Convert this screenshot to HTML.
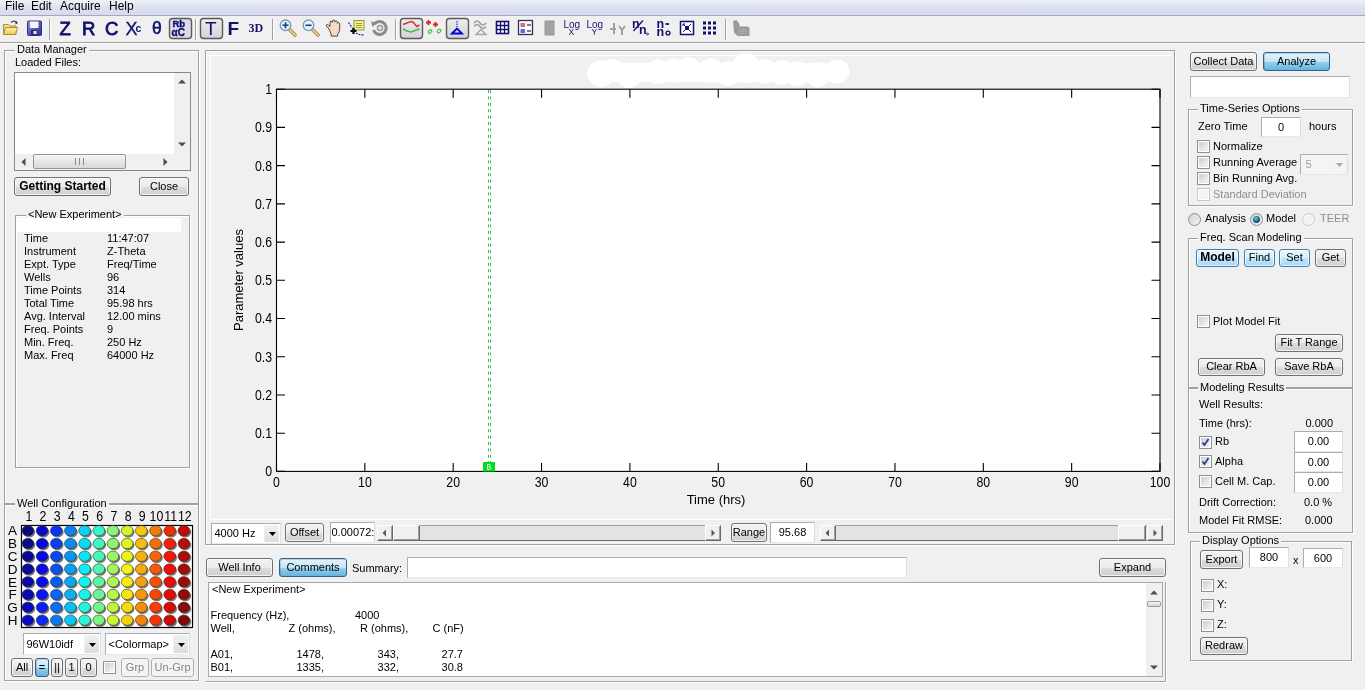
<!DOCTYPE html><html><head><meta charset="utf-8"><style>
*{margin:0;padding:0}
html,body{width:1365px;height:690px;overflow:hidden;background:#f0f0f0;font-family:"Liberation Sans",sans-serif;font-size:11px;color:#000}
div{position:absolute;box-sizing:border-box}
body{will-change:transform}
.t{white-space:pre;line-height:14px;height:14px}
.gt{white-space:pre;line-height:14px;height:14px;background:linear-gradient(transparent 6px,#f0f0f0 6px,#f0f0f0 10px,transparent 10px);padding:0 2px;z-index:5}
.grp{border:1px solid #a0a0a0;box-shadow:inset 1px 1px 0 #fff,1px 1px 0 #fff}
.btn{border:1px solid #707070;border-radius:3px;background:linear-gradient(#f3f3f3 0%,#ebebeb 50%,#dddddd 51%,#cfcfcf 100%);box-shadow:inset 0 0 0 1px rgba(255,255,255,.7);text-align:center;display:flex;align-items:center;justify-content:center;white-space:pre;padding-bottom:2px}
.btn.blue{border-color:#3c7fb1;background:linear-gradient(#eaf6fd 0%,#d9f0fc 50%,#bee6fd 51%,#a7d9f5 100%)}
.btn.pr{border-color:#2c628b;background:linear-gradient(#e5f4fc 0%,#c4e5f6 50%,#98d1ef 51%,#68b3db 100%);box-shadow:inset 1px 1px 0 rgba(0,0,0,.15)}
.btn.dis{border-color:#adb2b5;background:#f4f4f4;color:#838383;box-shadow:none}
.edit{background:#fff;border:1px solid #abadb3;border-right-color:#dbdfe6;border-bottom-color:#e3e9ef;white-space:pre;overflow:hidden}
.cb{border:1px solid #8e8f8f;background:#fff}
.cb::before{content:"";position:absolute;left:1px;top:1px;right:1px;bottom:1px;background:linear-gradient(135deg,#cbcfd5,#f6f6f6)}
.cb.dis{border-color:#c9c9c9}
.cb.dis::before{background:#f4f4f4}
.cb svg{z-index:2}
.rd{border:1px solid #8e8f8f;border-radius:50%;background:linear-gradient(135deg,#cbcfd5,#f6f6f6)}
.rd.dis{border-color:#cacaca;background:#f4f4f4}
.rdot{left:2px;top:2px;width:7px;height:7px;border-radius:50%;background:radial-gradient(circle at 40% 35%,#6cc8e0,#13607e 55%,#0a3a50)}
.dd{border:1px solid #abadb3;border-right-color:#dbdfe6;border-bottom-color:#e3e9ef;white-space:pre}
.ddb{right:1px;top:1px;width:15px;background:linear-gradient(#f2f2f2,#dcdcdc);border-left:1px solid #f0f0f0}
.ddb.dis{background:transparent}
.ax{font-size:13px;line-height:15px;height:15px;white-space:pre}
</style></head><body>

<div style="left:0;top:0;width:1365px;height:15px;background:linear-gradient(#f1f3fa 0%,#dde2f2 45%,#d5dbee 100%)"></div>
<div style="left:0;top:15px;width:1365px;height:1px;background:#a7abb0"></div>
<div style="left:0;top:16px;width:1365px;height:26px;background:#f0f0f0"></div>
<div style="left:0;top:42px;width:1365px;height:1px;background:#a0a0a0"></div>
<div style="left:0;top:43px;width:1365px;height:1px;background:#ffffff"></div>
<div class="t" style="left:5px;top:-1px;font-size:12px;line-height:15px">File</div>
<div class="t" style="left:31px;top:-1px;font-size:12px;line-height:15px">Edit</div>
<div class="t" style="left:60px;top:-1px;font-size:12px;line-height:15px">Acquire</div>
<div class="t" style="left:109px;top:-1px;font-size:12px;line-height:15px">Help</div>

<svg style="position:absolute;left:0;top:0" width="800" height="44">
<defs>
<linearGradient id="tg" x1="0" y1="0" x2="0" y2="1"><stop offset="0" stop-color="#eeeeef"/><stop offset="1" stop-color="#d2d2d6"/></linearGradient>
<linearGradient id="fold" x1="0" y1="0" x2="0" y2="1"><stop offset="0" stop-color="#fff3a8"/><stop offset="1" stop-color="#f0c848"/></linearGradient>
<linearGradient id="flop" x1="0" y1="0" x2="1" y2="1"><stop offset="0" stop-color="#8d8de0"/><stop offset="1" stop-color="#2b2b8a"/></linearGradient>
</defs>
<!-- folder -->
<path d="M3.5 24.5 h5 l1.5 1.5 h6 v8.5 h-12.5z" fill="#f6e18a" stroke="#a88f38" stroke-width="1"/>
<path d="M3.5 34.5 l2 -7 h12 l-2 7z" fill="url(#fold)" stroke="#a88f38" stroke-width="1"/>
<path d="M11 22.5 q3 -3 6 0" fill="none" stroke="#404040" stroke-width="1.2"/>
<path d="M15.5 21 l2.5 2 l-2.5 1.5z" fill="#303030"/>
<!-- floppy -->
<rect x="27.5" y="21" width="14" height="14.5" rx="1" fill="url(#flop)" stroke="#30308a" stroke-width="1"/>
<rect x="30" y="21.5" width="8.5" height="6.5" fill="#f4f4ff"/>
<rect x="31" y="30" width="6" height="5" fill="#2a2a70"/>
<rect x="33.5" y="31" width="3" height="3" fill="#e8e8ff"/>
<!-- separators -->
<g fill="#a0a0a0"><rect x="49" y="19" width="1" height="21"/><rect x="195" y="19" width="1" height="21"/><rect x="272" y="19" width="1" height="21"/><rect x="395" y="19" width="1" height="21"/><rect x="725" y="19" width="1" height="21"/></g>
<g fill="#ffffff"><rect x="50" y="19" width="1" height="21"/><rect x="196" y="19" width="1" height="21"/><rect x="273" y="19" width="1" height="21"/><rect x="396" y="19" width="1" height="21"/><rect x="726" y="19" width="1" height="21"/></g>
<!-- letters -->
<g font-family="Liberation Sans" font-weight="bold" fill="#10106e">
<g font-weight="normal" stroke="#10106e" stroke-width="0.8">
<text x="59.5" y="34.6" font-size="18.5">Z</text>
<text x="82" y="34.6" font-size="18.5">R</text>
<text x="105" y="34.6" font-size="18.5">C</text>
</g>
<text x="125.5" y="34.6" font-size="18" font-weight="normal" stroke="#10106e" stroke-width="0.3">X</text>
<text x="135.5" y="31.5" font-size="10.5">c</text>
<text x="152" y="34" font-size="17.5" font-weight="normal" stroke="#10106e" stroke-width="0.6">θ</text>
</g>
<!-- RbaC toggle -->
<rect x="169.5" y="18.5" width="22" height="20" rx="3" fill="#dcdde6" stroke="#5a5a5a" stroke-width="1.4"/>
<g font-family="Liberation Sans" font-weight="bold" fill="#10106e">
<text x="172.5" y="27" font-size="9.5" stroke="#10106e" stroke-width="0.4">Rb</text>
<text x="171.5" y="35.5" font-size="10" stroke="#10106e" stroke-width="0.4">αC</text>
</g>
<!-- T toggle -->
<rect x="200.5" y="18.5" width="22" height="20" rx="3" fill="url(#tg)" stroke="#5a5a5a" stroke-width="1.4"/>
<g font-family="Liberation Sans" fill="#10106e">
<text x="205" y="35" font-size="19">T</text>
<text x="227.5" y="35" font-size="19" font-weight="bold">F</text>
<text x="248.5" y="32" font-size="12" font-weight="bold" font-family="Liberation Serif">3D</text>
</g>
<!-- zoom in / out -->
<g>
<path d="M289.5 29.5 L295 35" stroke="#a07838" stroke-width="3.4" stroke-linecap="round"/>
<path d="M289.5 29.5 L295 35" stroke="#e8c888" stroke-width="2" stroke-linecap="round"/>
<circle cx="285.5" cy="25.3" r="5.3" fill="#e4f2fb" stroke="#7a9ab0" stroke-width="1.3"/>
<path d="M282.5 25.3h6M285.5 22.3v6" stroke="#1a3a8a" stroke-width="1.6"/>
<path d="M312.5 29.5 L318 35" stroke="#a07838" stroke-width="3.4" stroke-linecap="round"/>
<path d="M312.5 29.5 L318 35" stroke="#e8c888" stroke-width="2" stroke-linecap="round"/>
<circle cx="308.5" cy="25.3" r="5.3" fill="#e4f2fb" stroke="#7a9ab0" stroke-width="1.3"/>
<path d="M305.5 25.3h6" stroke="#1a3a8a" stroke-width="1.6"/>
</g>
<!-- hand -->
<path d="M329 29 l-2.5 -3 q-0.5 -1.5 1 -1.5 l2.5 2 v-4 q0 -1.5 1.3 -1.3 q1 .3 1 1.3 v-1 q0 -1.5 1.3 -1.5 q1.3 0 1.3 1.5 v0.5 q0.3 -1.3 1.3 -1.1 q1.2 .3 1.2 1.5 v1 q.4 -1 1.3 -.8 q1 .3 1 1.5 v5 q0 3 -2 5 v2 h-6.5 v-2 z" fill="#f6dcc4" stroke="#3a3a3a" stroke-width="0.9"/>
<!-- datatip -->
<rect x="354" y="20.5" width="10" height="9.5" fill="#f2f08a" stroke="#8a9a50" stroke-width="1"/>
<path d="M356 23.5h6M356 25.5h6M356 27.5h6" stroke="#8a8a40" stroke-width="0.8"/>
<path d="M348.5 22.5 l4 6 M356 33 q3 2 8 2" fill="none" stroke="#2020a0" stroke-width="1.1" stroke-dasharray="2 1"/>
<path d="M350.5 31h6M353.5 28v6" stroke="#000" stroke-width="2.2"/>
<!-- rotate -->
<path d="M374.5 24 A6.5 6.5 0 1 1 373.5 30" fill="none" stroke="#8c8c8c" stroke-width="3"/>
<path d="M371 21.5 l6 1 l-4.5 4.5z" fill="#8c8c8c"/>
<circle cx="380" cy="28" r="2.5" fill="none" stroke="#9a9a9a" stroke-width="1.5"/>
<!-- line toggle -->
<rect x="400.5" y="18.5" width="22" height="20" rx="3" fill="url(#tg)" stroke="#5a5a5a" stroke-width="1.4"/>
<path d="M403 24.5 L407 23 L411 21.5 L413 22 L415.5 25 L417 26.5 L419.5 25" fill="none" stroke="#e0303a" stroke-width="1.5"/>
<path d="M403 29 L407 31 L411 32 L415 30.5 L419.5 29" fill="none" stroke="#3ac040" stroke-width="1.5"/>
<!-- markers -->
<path d="M426 22.5h5M428.5 20v5M433 24.5h5M435.5 22v5" stroke="#e02020" stroke-width="1.8"/>
<ellipse cx="430" cy="31.5" rx="2" ry="1.5" transform="rotate(-40 430 31.5)" fill="none" stroke="#40c040" stroke-width="1.2"/>
<ellipse cx="439" cy="31" rx="2" ry="1.5" transform="rotate(-40 439 31)" fill="none" stroke="#40c040" stroke-width="1.2"/>
<!-- triangle toggle -->
<rect x="446.5" y="18.5" width="22" height="20" rx="3" fill="url(#tg)" stroke="#5a5a5a" stroke-width="1.4"/>
<path d="M457 21v6" stroke="#0000d0" stroke-width="1" stroke-dasharray="1.5 1"/>
<path d="M452 33.5 L457 28.5 L462 33.5 Z" fill="none" stroke="#0000d8" stroke-width="1.8"/>
<!-- gray wave icon -->
<path d="M474 23 q3 -4 6 0 t6 0 M474 26.5 q3 -4 6 0 t6 0" fill="none" stroke="#a0a0a0" stroke-width="1.6"/>
<path d="M476 34.5 L481 29.5 L486 34.5 Z" fill="none" stroke="#a8a8a8" stroke-width="1.5"/>
<!-- grid -->
<rect x="496.5" y="21.5" width="12" height="12" fill="#fff" stroke="#12126e" stroke-width="1.6"/>
<path d="M500.5 21.5v12M504.5 21.5v12M496.5 25.5h12M496.5 29.5h12" stroke="#12126e" stroke-width="1.3"/>
<!-- legend -->
<rect x="518.5" y="20.5" width="14" height="14" fill="#fbfbff" stroke="#30305a" stroke-width="1.3"/>
<rect x="520.5" y="23" width="4.5" height="4" fill="#d07070"/>
<rect x="520.5" y="29" width="4.5" height="4" fill="#5070d8"/>
<path d="M527 25h4M527 31h4" stroke="#000" stroke-width="1.2"/>
<!-- gray rect -->
<rect x="544.5" y="20.5" width="10" height="15" rx="1" fill="#979797"/>
<rect x="545.5" y="21.5" width="8" height="13" fill="#a2a2a2"/>
<!-- log x / log y -->
<g font-family="Liberation Sans" fill="#14146e" font-size="10">
<text x="563.5" y="28">Log</text><text x="568.5" y="35" font-size="8.5">X</text>
<text x="586.5" y="28">Log</text><text x="591.5" y="35" font-size="8.5">Y</text>
</g>
<!-- gray xy icon -->
<g stroke="#a0a0a0" stroke-width="2" fill="none"><path d="M614 23v11M610 29h6"/><path d="M619 26l3 4l3 -4M622 30v5"/></g>
<!-- n/n0 -->
<g font-family="Liberation Sans" font-weight="bold" fill="#10106e">
<text x="632" y="27.5" font-size="12.5">n</text>
<text x="639" y="34" font-size="12.5">n</text>
<text x="656.5" y="27.5" font-size="12.5">n</text>
<text x="656.5" y="35.5" font-size="12.5">n</text>
</g>
<path d="M633.5 31 L643 20.5" stroke="#10106e" stroke-width="1.3"/>
<circle cx="647.5" cy="34" r="1" fill="none" stroke="#10106e" stroke-width="0.8"/>
<path d="M665.5 24h3.5" stroke="#10106e" stroke-width="1.8"/>
<circle cx="668" cy="33" r="1.9" fill="none" stroke="#10106e" stroke-width="1.4"/>
<!-- expand box -->
<rect x="680.5" y="21.5" width="13" height="13" fill="#fff" stroke="#10106e" stroke-width="1.5"/>
<rect x="685" y="26" width="4" height="4" fill="#10106e"/>
<path d="M683 24l2.5 2.5M691 24l-2.5 2.5M683 32l2.5 -2.5M691 32l-2.5 -2.5" stroke="#10106e" stroke-width="1"/>
<path d="M683 24h2v0M683 24v2" stroke="#10106e" stroke-width="1"/>
<!-- dots -->
<g fill="#10106e">
<rect x="703" y="21.5" width="3" height="3"/><rect x="708" y="21.5" width="3" height="3"/><rect x="713" y="21.5" width="3" height="3"/>
<rect x="703" y="26.5" width="3" height="3"/><rect x="708" y="26.5" width="3" height="3"/><rect x="713" y="26.5" width="3" height="3"/>
<rect x="703" y="31.5" width="3" height="3"/><rect x="708" y="31.5" width="3" height="3"/><rect x="713" y="31.5" width="3" height="3"/>
</g>
<!-- gray hand icon -->
<path d="M733 21 l3.5 -1 l3 4 v2.5 h7.5 q2.5 0 2.5 2.5 v7 h-12 l-3.5 -3.5 z" fill="#9a9a9a"/>
<path d="M738 29.5h9M738 31.5h9M738 33.5h9" stroke="#b8b8b8" stroke-width="0.7"/>
</svg>

<div class="grp" style="left:4px;top:50px;width:195px;height:454px;"></div>
<div class="gt" style="left:15px;top:42px">Data Manager</div>
<div class="t " style="left:15px;top:55px;">Loaded Files:</div>
<div class="edit" style="left:14px;top:72px;width:177px;height:99px;border-color:#828790;"></div>
<div style="left:174px;top:73px;width:16px;height:81px;background:#f0f0f0"></div>
<div style="left:15px;top:154px;width:159px;height:16px;background:#f0f0f0"></div>
<div style="left:174px;top:154px;width:16px;height:16px;background:#f0f0f0"></div>
<svg style="position:absolute;left:178px;top:79px" width="8" height="5"><path d="M0 4.5L4 0.5L8 4.5Z" fill="#4d4d4d"/></svg>
<svg style="position:absolute;left:178px;top:142px" width="8" height="5"><path d="M0 0.5L4 4.5L8 0.5Z" fill="#4d4d4d"/></svg>
<svg style="position:absolute;left:21px;top:158px" width="5" height="8"><path d="M4.5 0L0.5 4L4.5 8Z" fill="#4d4d4d"/></svg>
<svg style="position:absolute;left:163px;top:158px" width="5" height="8"><path d="M0.5 0L4.5 4L0.5 8Z" fill="#4d4d4d"/></svg>
<div style="left:33px;top:154px;width:93px;height:15px;border:1px solid #959595;border-radius:2px;background:linear-gradient(#f5f5f5,#d8d8d8)"></div>
<div style="left:75px;top:158px;width:9px;height:7px;border-left:1px solid #8a8a8a;border-right:1px solid #8a8a8a"><div style="left:3px;top:0;width:1px;height:7px;background:#8a8a8a"></div></div>
<div class="btn" style="left:14px;top:177px;width:97px;height:19px;"><span><b style="font-size:12px">Getting Started</b></span></div>
<div class="btn" style="left:139px;top:177px;width:50px;height:19px;"><span>Close</span></div>
<div class="grp" style="left:15px;top:215px;width:175px;height:253px;"></div>
<div class="gt" style="left:26px;top:207px">&lt;New Experiment&gt;</div>
<div style="left:16px;top:218px;width:165px;height:14px;background:#fff"></div>
<div class="t " style="left:24px;top:231px;">Time</div>
<div class="t " style="left:107px;top:231px;">11:47:07</div>
<div class="t " style="left:24px;top:244px;">Instrument</div>
<div class="t " style="left:107px;top:244px;">Z-Theta</div>
<div class="t " style="left:24px;top:257px;">Expt. Type</div>
<div class="t " style="left:107px;top:257px;">Freq/Time</div>
<div class="t " style="left:24px;top:270px;">Wells</div>
<div class="t " style="left:107px;top:270px;">96</div>
<div class="t " style="left:24px;top:283px;">Time Points</div>
<div class="t " style="left:107px;top:283px;">314</div>
<div class="t " style="left:24px;top:296px;">Total Time</div>
<div class="t " style="left:107px;top:296px;">95.98 hrs</div>
<div class="t " style="left:24px;top:309px;">Avg. Interval</div>
<div class="t " style="left:107px;top:309px;">12.00 mins</div>
<div class="t " style="left:24px;top:322px;">Freq. Points</div>
<div class="t " style="left:107px;top:322px;">9</div>
<div class="t " style="left:24px;top:335px;">Min. Freq.</div>
<div class="t " style="left:107px;top:335px;">250 Hz</div>
<div class="t " style="left:24px;top:348px;">Max. Freq</div>
<div class="t " style="left:107px;top:348px;">64000 Hz</div>
<div class="grp" style="left:4px;top:504px;width:195px;height:177px;"></div>
<div class="gt" style="left:15px;top:496px">Well Configuration</div>
<svg style="position:absolute;left:0;top:505px" width="200" height="125">
<g font-family="Liberation Sans" font-size="12.5" fill="#000" text-anchor="middle">
<text transform="translate(28.8 15.8) scale(0.88 1)" font-size="14">1</text>
<text transform="translate(43.0 15.8) scale(0.88 1)" font-size="14">2</text>
<text transform="translate(57.2 15.8) scale(0.88 1)" font-size="14">3</text>
<text transform="translate(71.3 15.8) scale(0.88 1)" font-size="14">4</text>
<text transform="translate(85.5 15.8) scale(0.88 1)" font-size="14">5</text>
<text transform="translate(99.7 15.8) scale(0.88 1)" font-size="14">6</text>
<text transform="translate(113.9 15.8) scale(0.88 1)" font-size="14">7</text>
<text transform="translate(128.1 15.8) scale(0.88 1)" font-size="14">8</text>
<text transform="translate(142.2 15.8) scale(0.88 1)" font-size="14">9</text>
<text transform="translate(156.4 15.8) scale(0.88 1)" font-size="14">10</text>
<text transform="translate(170.6 15.8) scale(0.88 1)" font-size="14">11</text>
<text transform="translate(184.8 15.8) scale(0.88 1)" font-size="14">12</text>
</g>
<g font-family="Liberation Sans" font-size="13.5" fill="#000" text-anchor="middle">
<text x="12.5" y="30.4">A</text>
<text x="12.5" y="43.2">B</text>
<text x="12.5" y="55.9">C</text>
<text x="12.5" y="68.7">D</text>
<text x="12.5" y="81.5">E</text>
<text x="12.5" y="94.2">F</text>
<text x="12.5" y="107.0">G</text>
<text x="12.5" y="119.8">H</text>
</g>
<rect x="21.5" y="20.5" width="171" height="102" fill="#fff" stroke="#000" stroke-width="1.2"/>
<ellipse cx="29.2" cy="27.3" rx="6" ry="5.2" fill="#7a7a7a"/>
<ellipse cx="27.9" cy="25.7" rx="5.9" ry="5.2" fill="#0a0a7f" stroke="#303020" stroke-opacity="0.75" stroke-width="0.8"/>
<ellipse cx="29.2" cy="40.1" rx="6" ry="5.2" fill="#7a7a7a"/>
<ellipse cx="27.9" cy="38.5" rx="5.9" ry="5.2" fill="#0a0a89" stroke="#303020" stroke-opacity="0.75" stroke-width="0.8"/>
<ellipse cx="29.2" cy="52.8" rx="6" ry="5.2" fill="#7a7a7a"/>
<ellipse cx="27.9" cy="51.2" rx="5.9" ry="5.2" fill="#0a0a93" stroke="#303020" stroke-opacity="0.75" stroke-width="0.8"/>
<ellipse cx="29.2" cy="65.6" rx="6" ry="5.2" fill="#7a7a7a"/>
<ellipse cx="27.9" cy="64.0" rx="5.9" ry="5.2" fill="#0a0a9d" stroke="#303020" stroke-opacity="0.75" stroke-width="0.8"/>
<ellipse cx="29.2" cy="78.4" rx="6" ry="5.2" fill="#7a7a7a"/>
<ellipse cx="27.9" cy="76.8" rx="5.9" ry="5.2" fill="#0a0aa7" stroke="#303020" stroke-opacity="0.75" stroke-width="0.8"/>
<ellipse cx="29.2" cy="91.1" rx="6" ry="5.2" fill="#7a7a7a"/>
<ellipse cx="27.9" cy="89.5" rx="5.9" ry="5.2" fill="#0a0ab1" stroke="#303020" stroke-opacity="0.75" stroke-width="0.8"/>
<ellipse cx="29.2" cy="103.9" rx="6" ry="5.2" fill="#7a7a7a"/>
<ellipse cx="27.9" cy="102.3" rx="5.9" ry="5.2" fill="#0a0abb" stroke="#303020" stroke-opacity="0.75" stroke-width="0.8"/>
<ellipse cx="29.2" cy="116.7" rx="6" ry="5.2" fill="#7a7a7a"/>
<ellipse cx="27.9" cy="115.1" rx="5.9" ry="5.2" fill="#0a0ac4" stroke="#303020" stroke-opacity="0.75" stroke-width="0.8"/>
<ellipse cx="43.4" cy="27.3" rx="6" ry="5.2" fill="#7a7a7a"/>
<ellipse cx="42.1" cy="25.7" rx="5.9" ry="5.2" fill="#0a0ace" stroke="#303020" stroke-opacity="0.75" stroke-width="0.8"/>
<ellipse cx="43.4" cy="40.1" rx="6" ry="5.2" fill="#7a7a7a"/>
<ellipse cx="42.1" cy="38.5" rx="5.9" ry="5.2" fill="#0a0ad8" stroke="#303020" stroke-opacity="0.75" stroke-width="0.8"/>
<ellipse cx="43.4" cy="52.8" rx="6" ry="5.2" fill="#7a7a7a"/>
<ellipse cx="42.1" cy="51.2" rx="5.9" ry="5.2" fill="#0a0ae2" stroke="#303020" stroke-opacity="0.75" stroke-width="0.8"/>
<ellipse cx="43.4" cy="65.6" rx="6" ry="5.2" fill="#7a7a7a"/>
<ellipse cx="42.1" cy="64.0" rx="5.9" ry="5.2" fill="#0a0aec" stroke="#303020" stroke-opacity="0.75" stroke-width="0.8"/>
<ellipse cx="43.4" cy="78.4" rx="6" ry="5.2" fill="#7a7a7a"/>
<ellipse cx="42.1" cy="76.8" rx="5.9" ry="5.2" fill="#0a0bf5" stroke="#303020" stroke-opacity="0.75" stroke-width="0.8"/>
<ellipse cx="43.4" cy="91.1" rx="6" ry="5.2" fill="#7a7a7a"/>
<ellipse cx="42.1" cy="89.5" rx="5.9" ry="5.2" fill="#0a15f5" stroke="#303020" stroke-opacity="0.75" stroke-width="0.8"/>
<ellipse cx="43.4" cy="103.9" rx="6" ry="5.2" fill="#7a7a7a"/>
<ellipse cx="42.1" cy="102.3" rx="5.9" ry="5.2" fill="#0a1ff5" stroke="#303020" stroke-opacity="0.75" stroke-width="0.8"/>
<ellipse cx="43.4" cy="116.7" rx="6" ry="5.2" fill="#7a7a7a"/>
<ellipse cx="42.1" cy="115.1" rx="5.9" ry="5.2" fill="#0a29f5" stroke="#303020" stroke-opacity="0.75" stroke-width="0.8"/>
<ellipse cx="57.6" cy="27.3" rx="6" ry="5.2" fill="#7a7a7a"/>
<ellipse cx="56.3" cy="25.7" rx="5.9" ry="5.2" fill="#0a33f5" stroke="#303020" stroke-opacity="0.75" stroke-width="0.8"/>
<ellipse cx="57.6" cy="40.1" rx="6" ry="5.2" fill="#7a7a7a"/>
<ellipse cx="56.3" cy="38.5" rx="5.9" ry="5.2" fill="#0a3df5" stroke="#303020" stroke-opacity="0.75" stroke-width="0.8"/>
<ellipse cx="57.6" cy="52.8" rx="6" ry="5.2" fill="#7a7a7a"/>
<ellipse cx="56.3" cy="51.2" rx="5.9" ry="5.2" fill="#0a47f5" stroke="#303020" stroke-opacity="0.75" stroke-width="0.8"/>
<ellipse cx="57.6" cy="65.6" rx="6" ry="5.2" fill="#7a7a7a"/>
<ellipse cx="56.3" cy="64.0" rx="5.9" ry="5.2" fill="#0a50f5" stroke="#303020" stroke-opacity="0.75" stroke-width="0.8"/>
<ellipse cx="57.6" cy="78.4" rx="6" ry="5.2" fill="#7a7a7a"/>
<ellipse cx="56.3" cy="76.8" rx="5.9" ry="5.2" fill="#0a5af5" stroke="#303020" stroke-opacity="0.75" stroke-width="0.8"/>
<ellipse cx="57.6" cy="91.1" rx="6" ry="5.2" fill="#7a7a7a"/>
<ellipse cx="56.3" cy="89.5" rx="5.9" ry="5.2" fill="#0a64f5" stroke="#303020" stroke-opacity="0.75" stroke-width="0.8"/>
<ellipse cx="57.6" cy="103.9" rx="6" ry="5.2" fill="#7a7a7a"/>
<ellipse cx="56.3" cy="102.3" rx="5.9" ry="5.2" fill="#0a6ef5" stroke="#303020" stroke-opacity="0.75" stroke-width="0.8"/>
<ellipse cx="57.6" cy="116.7" rx="6" ry="5.2" fill="#7a7a7a"/>
<ellipse cx="56.3" cy="115.1" rx="5.9" ry="5.2" fill="#0a78f5" stroke="#303020" stroke-opacity="0.75" stroke-width="0.8"/>
<ellipse cx="71.7" cy="27.3" rx="6" ry="5.2" fill="#7a7a7a"/>
<ellipse cx="70.4" cy="25.7" rx="5.9" ry="5.2" fill="#0a82f5" stroke="#303020" stroke-opacity="0.75" stroke-width="0.8"/>
<ellipse cx="71.7" cy="40.1" rx="6" ry="5.2" fill="#7a7a7a"/>
<ellipse cx="70.4" cy="38.5" rx="5.9" ry="5.2" fill="#0a8cf5" stroke="#303020" stroke-opacity="0.75" stroke-width="0.8"/>
<ellipse cx="71.7" cy="52.8" rx="6" ry="5.2" fill="#7a7a7a"/>
<ellipse cx="70.4" cy="51.2" rx="5.9" ry="5.2" fill="#0a96f5" stroke="#303020" stroke-opacity="0.75" stroke-width="0.8"/>
<ellipse cx="71.7" cy="65.6" rx="6" ry="5.2" fill="#7a7a7a"/>
<ellipse cx="70.4" cy="64.0" rx="5.9" ry="5.2" fill="#0a9ff5" stroke="#303020" stroke-opacity="0.75" stroke-width="0.8"/>
<ellipse cx="71.7" cy="78.4" rx="6" ry="5.2" fill="#7a7a7a"/>
<ellipse cx="70.4" cy="76.8" rx="5.9" ry="5.2" fill="#0aa9f5" stroke="#303020" stroke-opacity="0.75" stroke-width="0.8"/>
<ellipse cx="71.7" cy="91.1" rx="6" ry="5.2" fill="#7a7a7a"/>
<ellipse cx="70.4" cy="89.5" rx="5.9" ry="5.2" fill="#0ab3f5" stroke="#303020" stroke-opacity="0.75" stroke-width="0.8"/>
<ellipse cx="71.7" cy="103.9" rx="6" ry="5.2" fill="#7a7a7a"/>
<ellipse cx="70.4" cy="102.3" rx="5.9" ry="5.2" fill="#0abdf5" stroke="#303020" stroke-opacity="0.75" stroke-width="0.8"/>
<ellipse cx="71.7" cy="116.7" rx="6" ry="5.2" fill="#7a7a7a"/>
<ellipse cx="70.4" cy="115.1" rx="5.9" ry="5.2" fill="#0ac7f5" stroke="#303020" stroke-opacity="0.75" stroke-width="0.8"/>
<ellipse cx="85.9" cy="27.3" rx="6" ry="5.2" fill="#7a7a7a"/>
<ellipse cx="84.6" cy="25.7" rx="5.9" ry="5.2" fill="#0ad1f5" stroke="#303020" stroke-opacity="0.75" stroke-width="0.8"/>
<ellipse cx="85.9" cy="40.1" rx="6" ry="5.2" fill="#7a7a7a"/>
<ellipse cx="84.6" cy="38.5" rx="5.9" ry="5.2" fill="#0adbf5" stroke="#303020" stroke-opacity="0.75" stroke-width="0.8"/>
<ellipse cx="85.9" cy="52.8" rx="6" ry="5.2" fill="#7a7a7a"/>
<ellipse cx="84.6" cy="51.2" rx="5.9" ry="5.2" fill="#0ae5f5" stroke="#303020" stroke-opacity="0.75" stroke-width="0.8"/>
<ellipse cx="85.9" cy="65.6" rx="6" ry="5.2" fill="#7a7a7a"/>
<ellipse cx="84.6" cy="64.0" rx="5.9" ry="5.2" fill="#0aeef5" stroke="#303020" stroke-opacity="0.75" stroke-width="0.8"/>
<ellipse cx="85.9" cy="78.4" rx="6" ry="5.2" fill="#7a7a7a"/>
<ellipse cx="84.6" cy="76.8" rx="5.9" ry="5.2" fill="#0ef5f1" stroke="#303020" stroke-opacity="0.75" stroke-width="0.8"/>
<ellipse cx="85.9" cy="91.1" rx="6" ry="5.2" fill="#7a7a7a"/>
<ellipse cx="84.6" cy="89.5" rx="5.9" ry="5.2" fill="#18f5e7" stroke="#303020" stroke-opacity="0.75" stroke-width="0.8"/>
<ellipse cx="85.9" cy="103.9" rx="6" ry="5.2" fill="#7a7a7a"/>
<ellipse cx="84.6" cy="102.3" rx="5.9" ry="5.2" fill="#21f5dd" stroke="#303020" stroke-opacity="0.75" stroke-width="0.8"/>
<ellipse cx="85.9" cy="116.7" rx="6" ry="5.2" fill="#7a7a7a"/>
<ellipse cx="84.6" cy="115.1" rx="5.9" ry="5.2" fill="#2bf5d3" stroke="#303020" stroke-opacity="0.75" stroke-width="0.8"/>
<ellipse cx="100.1" cy="27.3" rx="6" ry="5.2" fill="#7a7a7a"/>
<ellipse cx="98.8" cy="25.7" rx="5.9" ry="5.2" fill="#35f5c9" stroke="#303020" stroke-opacity="0.75" stroke-width="0.8"/>
<ellipse cx="100.1" cy="40.1" rx="6" ry="5.2" fill="#7a7a7a"/>
<ellipse cx="98.8" cy="38.5" rx="5.9" ry="5.2" fill="#3ff5c0" stroke="#303020" stroke-opacity="0.75" stroke-width="0.8"/>
<ellipse cx="100.1" cy="52.8" rx="6" ry="5.2" fill="#7a7a7a"/>
<ellipse cx="98.8" cy="51.2" rx="5.9" ry="5.2" fill="#49f5b6" stroke="#303020" stroke-opacity="0.75" stroke-width="0.8"/>
<ellipse cx="100.1" cy="65.6" rx="6" ry="5.2" fill="#7a7a7a"/>
<ellipse cx="98.8" cy="64.0" rx="5.9" ry="5.2" fill="#53f5ac" stroke="#303020" stroke-opacity="0.75" stroke-width="0.8"/>
<ellipse cx="100.1" cy="78.4" rx="6" ry="5.2" fill="#7a7a7a"/>
<ellipse cx="98.8" cy="76.8" rx="5.9" ry="5.2" fill="#5df5a2" stroke="#303020" stroke-opacity="0.75" stroke-width="0.8"/>
<ellipse cx="100.1" cy="91.1" rx="6" ry="5.2" fill="#7a7a7a"/>
<ellipse cx="98.8" cy="89.5" rx="5.9" ry="5.2" fill="#67f598" stroke="#303020" stroke-opacity="0.75" stroke-width="0.8"/>
<ellipse cx="100.1" cy="103.9" rx="6" ry="5.2" fill="#7a7a7a"/>
<ellipse cx="98.8" cy="102.3" rx="5.9" ry="5.2" fill="#70f58e" stroke="#303020" stroke-opacity="0.75" stroke-width="0.8"/>
<ellipse cx="100.1" cy="116.7" rx="6" ry="5.2" fill="#7a7a7a"/>
<ellipse cx="98.8" cy="115.1" rx="5.9" ry="5.2" fill="#7af584" stroke="#303020" stroke-opacity="0.75" stroke-width="0.8"/>
<ellipse cx="114.3" cy="27.3" rx="6" ry="5.2" fill="#7a7a7a"/>
<ellipse cx="113.0" cy="25.7" rx="5.9" ry="5.2" fill="#84f57a" stroke="#303020" stroke-opacity="0.75" stroke-width="0.8"/>
<ellipse cx="114.3" cy="40.1" rx="6" ry="5.2" fill="#7a7a7a"/>
<ellipse cx="113.0" cy="38.5" rx="5.9" ry="5.2" fill="#8ef570" stroke="#303020" stroke-opacity="0.75" stroke-width="0.8"/>
<ellipse cx="114.3" cy="52.8" rx="6" ry="5.2" fill="#7a7a7a"/>
<ellipse cx="113.0" cy="51.2" rx="5.9" ry="5.2" fill="#98f567" stroke="#303020" stroke-opacity="0.75" stroke-width="0.8"/>
<ellipse cx="114.3" cy="65.6" rx="6" ry="5.2" fill="#7a7a7a"/>
<ellipse cx="113.0" cy="64.0" rx="5.9" ry="5.2" fill="#a2f55d" stroke="#303020" stroke-opacity="0.75" stroke-width="0.8"/>
<ellipse cx="114.3" cy="78.4" rx="6" ry="5.2" fill="#7a7a7a"/>
<ellipse cx="113.0" cy="76.8" rx="5.9" ry="5.2" fill="#acf553" stroke="#303020" stroke-opacity="0.75" stroke-width="0.8"/>
<ellipse cx="114.3" cy="91.1" rx="6" ry="5.2" fill="#7a7a7a"/>
<ellipse cx="113.0" cy="89.5" rx="5.9" ry="5.2" fill="#b6f549" stroke="#303020" stroke-opacity="0.75" stroke-width="0.8"/>
<ellipse cx="114.3" cy="103.9" rx="6" ry="5.2" fill="#7a7a7a"/>
<ellipse cx="113.0" cy="102.3" rx="5.9" ry="5.2" fill="#c0f53f" stroke="#303020" stroke-opacity="0.75" stroke-width="0.8"/>
<ellipse cx="114.3" cy="116.7" rx="6" ry="5.2" fill="#7a7a7a"/>
<ellipse cx="113.0" cy="115.1" rx="5.9" ry="5.2" fill="#c9f535" stroke="#303020" stroke-opacity="0.75" stroke-width="0.8"/>
<ellipse cx="128.5" cy="27.3" rx="6" ry="5.2" fill="#7a7a7a"/>
<ellipse cx="127.2" cy="25.7" rx="5.9" ry="5.2" fill="#d3f52b" stroke="#303020" stroke-opacity="0.75" stroke-width="0.8"/>
<ellipse cx="128.5" cy="40.1" rx="6" ry="5.2" fill="#7a7a7a"/>
<ellipse cx="127.2" cy="38.5" rx="5.9" ry="5.2" fill="#ddf521" stroke="#303020" stroke-opacity="0.75" stroke-width="0.8"/>
<ellipse cx="128.5" cy="52.8" rx="6" ry="5.2" fill="#7a7a7a"/>
<ellipse cx="127.2" cy="51.2" rx="5.9" ry="5.2" fill="#e7f518" stroke="#303020" stroke-opacity="0.75" stroke-width="0.8"/>
<ellipse cx="128.5" cy="65.6" rx="6" ry="5.2" fill="#7a7a7a"/>
<ellipse cx="127.2" cy="64.0" rx="5.9" ry="5.2" fill="#f1f50e" stroke="#303020" stroke-opacity="0.75" stroke-width="0.8"/>
<ellipse cx="128.5" cy="78.4" rx="6" ry="5.2" fill="#7a7a7a"/>
<ellipse cx="127.2" cy="76.8" rx="5.9" ry="5.2" fill="#f5ee0a" stroke="#303020" stroke-opacity="0.75" stroke-width="0.8"/>
<ellipse cx="128.5" cy="91.1" rx="6" ry="5.2" fill="#7a7a7a"/>
<ellipse cx="127.2" cy="89.5" rx="5.9" ry="5.2" fill="#f5e50a" stroke="#303020" stroke-opacity="0.75" stroke-width="0.8"/>
<ellipse cx="128.5" cy="103.9" rx="6" ry="5.2" fill="#7a7a7a"/>
<ellipse cx="127.2" cy="102.3" rx="5.9" ry="5.2" fill="#f5db0a" stroke="#303020" stroke-opacity="0.75" stroke-width="0.8"/>
<ellipse cx="128.5" cy="116.7" rx="6" ry="5.2" fill="#7a7a7a"/>
<ellipse cx="127.2" cy="115.1" rx="5.9" ry="5.2" fill="#f5d10a" stroke="#303020" stroke-opacity="0.75" stroke-width="0.8"/>
<ellipse cx="142.6" cy="27.3" rx="6" ry="5.2" fill="#7a7a7a"/>
<ellipse cx="141.3" cy="25.7" rx="5.9" ry="5.2" fill="#f5c70a" stroke="#303020" stroke-opacity="0.75" stroke-width="0.8"/>
<ellipse cx="142.6" cy="40.1" rx="6" ry="5.2" fill="#7a7a7a"/>
<ellipse cx="141.3" cy="38.5" rx="5.9" ry="5.2" fill="#f5bd0a" stroke="#303020" stroke-opacity="0.75" stroke-width="0.8"/>
<ellipse cx="142.6" cy="52.8" rx="6" ry="5.2" fill="#7a7a7a"/>
<ellipse cx="141.3" cy="51.2" rx="5.9" ry="5.2" fill="#f5b30a" stroke="#303020" stroke-opacity="0.75" stroke-width="0.8"/>
<ellipse cx="142.6" cy="65.6" rx="6" ry="5.2" fill="#7a7a7a"/>
<ellipse cx="141.3" cy="64.0" rx="5.9" ry="5.2" fill="#f5a90a" stroke="#303020" stroke-opacity="0.75" stroke-width="0.8"/>
<ellipse cx="142.6" cy="78.4" rx="6" ry="5.2" fill="#7a7a7a"/>
<ellipse cx="141.3" cy="76.8" rx="5.9" ry="5.2" fill="#f59f0a" stroke="#303020" stroke-opacity="0.75" stroke-width="0.8"/>
<ellipse cx="142.6" cy="91.1" rx="6" ry="5.2" fill="#7a7a7a"/>
<ellipse cx="141.3" cy="89.5" rx="5.9" ry="5.2" fill="#f5960a" stroke="#303020" stroke-opacity="0.75" stroke-width="0.8"/>
<ellipse cx="142.6" cy="103.9" rx="6" ry="5.2" fill="#7a7a7a"/>
<ellipse cx="141.3" cy="102.3" rx="5.9" ry="5.2" fill="#f58c0a" stroke="#303020" stroke-opacity="0.75" stroke-width="0.8"/>
<ellipse cx="142.6" cy="116.7" rx="6" ry="5.2" fill="#7a7a7a"/>
<ellipse cx="141.3" cy="115.1" rx="5.9" ry="5.2" fill="#f5820a" stroke="#303020" stroke-opacity="0.75" stroke-width="0.8"/>
<ellipse cx="156.8" cy="27.3" rx="6" ry="5.2" fill="#7a7a7a"/>
<ellipse cx="155.5" cy="25.7" rx="5.9" ry="5.2" fill="#f5780a" stroke="#303020" stroke-opacity="0.75" stroke-width="0.8"/>
<ellipse cx="156.8" cy="40.1" rx="6" ry="5.2" fill="#7a7a7a"/>
<ellipse cx="155.5" cy="38.5" rx="5.9" ry="5.2" fill="#f56e0a" stroke="#303020" stroke-opacity="0.75" stroke-width="0.8"/>
<ellipse cx="156.8" cy="52.8" rx="6" ry="5.2" fill="#7a7a7a"/>
<ellipse cx="155.5" cy="51.2" rx="5.9" ry="5.2" fill="#f5640a" stroke="#303020" stroke-opacity="0.75" stroke-width="0.8"/>
<ellipse cx="156.8" cy="65.6" rx="6" ry="5.2" fill="#7a7a7a"/>
<ellipse cx="155.5" cy="64.0" rx="5.9" ry="5.2" fill="#f55a0a" stroke="#303020" stroke-opacity="0.75" stroke-width="0.8"/>
<ellipse cx="156.8" cy="78.4" rx="6" ry="5.2" fill="#7a7a7a"/>
<ellipse cx="155.5" cy="76.8" rx="5.9" ry="5.2" fill="#f5500a" stroke="#303020" stroke-opacity="0.75" stroke-width="0.8"/>
<ellipse cx="156.8" cy="91.1" rx="6" ry="5.2" fill="#7a7a7a"/>
<ellipse cx="155.5" cy="89.5" rx="5.9" ry="5.2" fill="#f5470a" stroke="#303020" stroke-opacity="0.75" stroke-width="0.8"/>
<ellipse cx="156.8" cy="103.9" rx="6" ry="5.2" fill="#7a7a7a"/>
<ellipse cx="155.5" cy="102.3" rx="5.9" ry="5.2" fill="#f53d0a" stroke="#303020" stroke-opacity="0.75" stroke-width="0.8"/>
<ellipse cx="156.8" cy="116.7" rx="6" ry="5.2" fill="#7a7a7a"/>
<ellipse cx="155.5" cy="115.1" rx="5.9" ry="5.2" fill="#f5330a" stroke="#303020" stroke-opacity="0.75" stroke-width="0.8"/>
<ellipse cx="171.0" cy="27.3" rx="6" ry="5.2" fill="#7a7a7a"/>
<ellipse cx="169.7" cy="25.7" rx="5.9" ry="5.2" fill="#f5290a" stroke="#303020" stroke-opacity="0.75" stroke-width="0.8"/>
<ellipse cx="171.0" cy="40.1" rx="6" ry="5.2" fill="#7a7a7a"/>
<ellipse cx="169.7" cy="38.5" rx="5.9" ry="5.2" fill="#f51f0a" stroke="#303020" stroke-opacity="0.75" stroke-width="0.8"/>
<ellipse cx="171.0" cy="52.8" rx="6" ry="5.2" fill="#7a7a7a"/>
<ellipse cx="169.7" cy="51.2" rx="5.9" ry="5.2" fill="#f5150a" stroke="#303020" stroke-opacity="0.75" stroke-width="0.8"/>
<ellipse cx="171.0" cy="65.6" rx="6" ry="5.2" fill="#7a7a7a"/>
<ellipse cx="169.7" cy="64.0" rx="5.9" ry="5.2" fill="#f50b0a" stroke="#303020" stroke-opacity="0.75" stroke-width="0.8"/>
<ellipse cx="171.0" cy="78.4" rx="6" ry="5.2" fill="#7a7a7a"/>
<ellipse cx="169.7" cy="76.8" rx="5.9" ry="5.2" fill="#ec0a0a" stroke="#303020" stroke-opacity="0.75" stroke-width="0.8"/>
<ellipse cx="171.0" cy="91.1" rx="6" ry="5.2" fill="#7a7a7a"/>
<ellipse cx="169.7" cy="89.5" rx="5.9" ry="5.2" fill="#e20a0a" stroke="#303020" stroke-opacity="0.75" stroke-width="0.8"/>
<ellipse cx="171.0" cy="103.9" rx="6" ry="5.2" fill="#7a7a7a"/>
<ellipse cx="169.7" cy="102.3" rx="5.9" ry="5.2" fill="#d80a0a" stroke="#303020" stroke-opacity="0.75" stroke-width="0.8"/>
<ellipse cx="171.0" cy="116.7" rx="6" ry="5.2" fill="#7a7a7a"/>
<ellipse cx="169.7" cy="115.1" rx="5.9" ry="5.2" fill="#ce0a0a" stroke="#303020" stroke-opacity="0.75" stroke-width="0.8"/>
<ellipse cx="185.2" cy="27.3" rx="6" ry="5.2" fill="#7a7a7a"/>
<ellipse cx="183.9" cy="25.7" rx="5.9" ry="5.2" fill="#c40a0a" stroke="#303020" stroke-opacity="0.75" stroke-width="0.8"/>
<ellipse cx="185.2" cy="40.1" rx="6" ry="5.2" fill="#7a7a7a"/>
<ellipse cx="183.9" cy="38.5" rx="5.9" ry="5.2" fill="#bb0a0a" stroke="#303020" stroke-opacity="0.75" stroke-width="0.8"/>
<ellipse cx="185.2" cy="52.8" rx="6" ry="5.2" fill="#7a7a7a"/>
<ellipse cx="183.9" cy="51.2" rx="5.9" ry="5.2" fill="#b10a0a" stroke="#303020" stroke-opacity="0.75" stroke-width="0.8"/>
<ellipse cx="185.2" cy="65.6" rx="6" ry="5.2" fill="#7a7a7a"/>
<ellipse cx="183.9" cy="64.0" rx="5.9" ry="5.2" fill="#a70a0a" stroke="#303020" stroke-opacity="0.75" stroke-width="0.8"/>
<ellipse cx="185.2" cy="78.4" rx="6" ry="5.2" fill="#7a7a7a"/>
<ellipse cx="183.9" cy="76.8" rx="5.9" ry="5.2" fill="#9d0a0a" stroke="#303020" stroke-opacity="0.75" stroke-width="0.8"/>
<ellipse cx="185.2" cy="91.1" rx="6" ry="5.2" fill="#7a7a7a"/>
<ellipse cx="183.9" cy="89.5" rx="5.9" ry="5.2" fill="#930a0a" stroke="#303020" stroke-opacity="0.75" stroke-width="0.8"/>
<ellipse cx="185.2" cy="103.9" rx="6" ry="5.2" fill="#7a7a7a"/>
<ellipse cx="183.9" cy="102.3" rx="5.9" ry="5.2" fill="#890a0a" stroke="#303020" stroke-opacity="0.75" stroke-width="0.8"/>
<ellipse cx="185.2" cy="116.7" rx="6" ry="5.2" fill="#7a7a7a"/>
<ellipse cx="183.9" cy="115.1" rx="5.9" ry="5.2" fill="#7f0a0a" stroke="#303020" stroke-opacity="0.75" stroke-width="0.8"/>
</svg>
<div class="dd" style="left:23px;top:633px;width:78px;height:22px;background:#fff;color:#000"><span style="position:absolute;left:2.5px;top:0;line-height:20px">96W10idf</span><div class="ddb" style="height:18px"><svg width="7" height="4" viewBox="0 0 7 4" style="position:absolute;left:4px;top:8px"><path d="M0 0H7L3.5 4Z" fill="#000"/></svg></div></div>
<div class="dd" style="left:105px;top:633px;width:85px;height:22px;background:#fff;color:#000"><span style="position:absolute;left:2.5px;top:0;line-height:20px">&lt;Colormap&gt;</span><div class="ddb" style="height:18px"><svg width="7" height="4" viewBox="0 0 7 4" style="position:absolute;left:4px;top:8px"><path d="M0 0H7L3.5 4Z" fill="#000"/></svg></div></div>
<div class="btn" style="left:11px;top:658px;width:22px;height:19px;"><span>All</span></div>
<div class="btn pr" style="left:35px;top:658px;width:14px;height:19px;"><span>=</span></div>
<div class="btn" style="left:51px;top:658px;width:12px;height:19px;"><span>||</span></div>
<div class="btn" style="left:65px;top:658px;width:13px;height:19px;"><span>1</span></div>
<div class="btn" style="left:80px;top:658px;width:17px;height:19px;"><span>0</span></div>
<div class="cb" style="left:103px;top:661px;width:13px;height:13px;"></div>
<div class="btn dis" style="left:121px;top:658px;width:28px;height:19px;"><span>Grp</span></div>
<div class="btn dis" style="left:151px;top:658px;width:43px;height:19px;"><span>Un-Grp</span></div>
<div class="grp" style="left:205px;top:50px;width:970px;height:495px;"></div>
<div style="left:210px;top:55px;width:962px;height:1px;background:#fff"></div>
<div style="left:210px;top:55px;width:1px;height:464px;background:#fff"></div>
<div style="left:210px;top:519px;width:962px;height:1px;background:#fff"></div>
<svg style="position:absolute;left:0;top:0" width="1365" height="520">
<rect x="598" y="63" width="242" height="19" rx="9" fill="#fff"/>
<circle cx="600.5" cy="73.6" r="13.3" fill="#fff"/>
<circle cx="611.8" cy="70.5" r="11.5" fill="#fff"/>
<circle cx="629" cy="75.6" r="12.3" fill="#fff"/>
<circle cx="658" cy="71.5" r="12.3" fill="#fff"/>
<circle cx="674" cy="70.5" r="12.3" fill="#fff"/>
<circle cx="688.7" cy="69.5" r="12.3" fill="#fff"/>
<circle cx="711" cy="70.5" r="12.3" fill="#fff"/>
<circle cx="727.7" cy="73.6" r="12.3" fill="#fff"/>
<circle cx="746" cy="68.5" r="15" fill="#fff"/>
<circle cx="764.6" cy="71.5" r="12.3" fill="#fff"/>
<circle cx="782" cy="72.5" r="12.3" fill="#fff"/>
<circle cx="797.4" cy="73.6" r="12.3" fill="#fff"/>
<circle cx="818" cy="74.6" r="12.3" fill="#fff"/>
<circle cx="837.4" cy="71.5" r="12" fill="#fff"/>
<rect x="276.5" y="89.2" width="883.5" height="382.2" fill="#fff" stroke="#000" stroke-width="1.1"/>
<path d="M276.50 471.4v-8.5M276.50 89.2v8.5M276.5 471.40h8.5M1160.0 471.40h-8.5M364.85 471.4v-8.5M364.85 89.2v8.5M276.5 433.18h8.5M1160.0 433.18h-8.5M453.20 471.4v-8.5M453.20 89.2v8.5M276.5 394.96h8.5M1160.0 394.96h-8.5M541.55 471.4v-8.5M541.55 89.2v8.5M276.5 356.74h8.5M1160.0 356.74h-8.5M629.90 471.4v-8.5M629.90 89.2v8.5M276.5 318.52h8.5M1160.0 318.52h-8.5M718.25 471.4v-8.5M718.25 89.2v8.5M276.5 280.30h8.5M1160.0 280.30h-8.5M806.60 471.4v-8.5M806.60 89.2v8.5M276.5 242.08h8.5M1160.0 242.08h-8.5M894.95 471.4v-8.5M894.95 89.2v8.5M276.5 203.86h8.5M1160.0 203.86h-8.5M983.30 471.4v-8.5M983.30 89.2v8.5M276.5 165.64h8.5M1160.0 165.64h-8.5M1071.65 471.4v-8.5M1071.65 89.2v8.5M276.5 127.42h8.5M1160.0 127.42h-8.5M1160.00 471.4v-8.5M1160.00 89.2v8.5M276.5 89.20h8.5M1160.0 89.20h-8.5" stroke="#000" stroke-width="1.1"/>
<g font-family="Liberation Sans" font-size="13" fill="#000">
<text transform="translate(276.5 486.8) scale(0.86 1)" font-size="14.3" text-anchor="middle">0</text>
<text transform="translate(272 476.3) scale(0.86 1)" font-size="14.3" text-anchor="end">0</text>
<text transform="translate(364.9 486.8) scale(0.86 1)" font-size="14.3" text-anchor="middle">10</text>
<text transform="translate(272 438.1) scale(0.86 1)" font-size="14.3" text-anchor="end">0.1</text>
<text transform="translate(453.2 486.8) scale(0.86 1)" font-size="14.3" text-anchor="middle">20</text>
<text transform="translate(272 399.9) scale(0.86 1)" font-size="14.3" text-anchor="end">0.2</text>
<text transform="translate(541.5 486.8) scale(0.86 1)" font-size="14.3" text-anchor="middle">30</text>
<text transform="translate(272 361.6) scale(0.86 1)" font-size="14.3" text-anchor="end">0.3</text>
<text transform="translate(629.9 486.8) scale(0.86 1)" font-size="14.3" text-anchor="middle">40</text>
<text transform="translate(272 323.4) scale(0.86 1)" font-size="14.3" text-anchor="end">0.4</text>
<text transform="translate(718.2 486.8) scale(0.86 1)" font-size="14.3" text-anchor="middle">50</text>
<text transform="translate(272 285.2) scale(0.86 1)" font-size="14.3" text-anchor="end">0.5</text>
<text transform="translate(806.6 486.8) scale(0.86 1)" font-size="14.3" text-anchor="middle">60</text>
<text transform="translate(272 247.0) scale(0.86 1)" font-size="14.3" text-anchor="end">0.6</text>
<text transform="translate(895.0 486.8) scale(0.86 1)" font-size="14.3" text-anchor="middle">70</text>
<text transform="translate(272 208.8) scale(0.86 1)" font-size="14.3" text-anchor="end">0.7</text>
<text transform="translate(983.3 486.8) scale(0.86 1)" font-size="14.3" text-anchor="middle">80</text>
<text transform="translate(272 170.5) scale(0.86 1)" font-size="14.3" text-anchor="end">0.8</text>
<text transform="translate(1071.7 486.8) scale(0.86 1)" font-size="14.3" text-anchor="middle">90</text>
<text transform="translate(272 132.3) scale(0.86 1)" font-size="14.3" text-anchor="end">0.9</text>
<text transform="translate(1160.0 486.8) scale(0.86 1)" font-size="14.3" text-anchor="middle">100</text>
<text transform="translate(272 94.1) scale(0.86 1)" font-size="14.3" text-anchor="end">1</text>
<text x="716" y="503.8" text-anchor="middle">Time (hrs)</text>
<text transform="translate(243.3 280) rotate(-90)" text-anchor="middle">Parameter values</text>
</g>
<path d="M488.5 90v372M490.5 90v372" stroke="#2cc43c" stroke-width="1" stroke-dasharray="3 3.4"/>
<rect x="483" y="462" width="12" height="9.5" fill="#00dd22"/>
<path d="M487.5 464.5v5M487.5 464.5h1.5q1.5 0 1.5 1.2t-1.5 1.3h-1.5M489 467h.5q1.5 0 1.5 1.2t-1.5 1.3h-2" fill="none" stroke="#e8ffe8" stroke-width="0.9"/>
</svg>
<div class="dd" style="left:211px;top:523px;width:70px;height:21px;background:#fff;color:#000"><span style="position:absolute;left:2.5px;top:0;line-height:19px">4000 Hz</span><div class="ddb" style="height:17px"><svg width="7" height="4" viewBox="0 0 7 4" style="position:absolute;left:4px;top:7px"><path d="M0 0H7L3.5 4Z" fill="#000"/></svg></div></div>
<div class="btn" style="left:285px;top:523px;width:39px;height:19px;"><span>Offset</span></div>
<div class="edit" style="left:330px;top:522px;width:45px;height:21px;text-align:left;line-height:19px;padding-left:0.5px">0.00072:</div>
<div style="left:377px;top:525px;width:344px;height:16px;background:#e3e3e3;border-top:1px solid #a0a0a0;border-bottom:1px solid #696969"></div>
<div style="left:377px;top:525px;width:16px;height:16px;background:#f0f0f0;border-top:1px solid #fff;border-left:1px solid #fff;border-right:1px solid #696969;border-bottom:1px solid #696969;box-shadow:inset -1px -1px 0 #a0a0a0"></div>
<div style="left:705px;top:525px;width:16px;height:16px;background:#f0f0f0;border-top:1px solid #fff;border-left:1px solid #fff;border-right:1px solid #696969;border-bottom:1px solid #696969;box-shadow:inset -1px -1px 0 #a0a0a0"></div>
<div style="left:393px;top:525px;width:27px;height:16px;background:#f0f0f0;border-top:1px solid #fff;border-left:1px solid #fff;border-right:1px solid #696969;border-bottom:1px solid #696969;box-shadow:inset -1px -1px 0 #a0a0a0"></div>
<svg style="position:absolute;left:382px;top:529px" width="5" height="8"><path d="M4 0.5L0.5 4L4 7.5Z" fill="#5a5a5a"/></svg>
<svg style="position:absolute;left:711px;top:529px" width="5" height="8"><path d="M0.5 0.5L4 4L0.5 7.5Z" fill="#5a5a5a"/></svg>
<div style="left:820px;top:525px;width:343px;height:16px;background:#e3e3e3;border-top:1px solid #a0a0a0;border-bottom:1px solid #696969"></div>
<div style="left:820px;top:525px;width:16px;height:16px;background:#f0f0f0;border-top:1px solid #fff;border-left:1px solid #fff;border-right:1px solid #696969;border-bottom:1px solid #696969;box-shadow:inset -1px -1px 0 #a0a0a0"></div>
<div style="left:1147px;top:525px;width:16px;height:16px;background:#f0f0f0;border-top:1px solid #fff;border-left:1px solid #fff;border-right:1px solid #696969;border-bottom:1px solid #696969;box-shadow:inset -1px -1px 0 #a0a0a0"></div>
<div style="left:1118px;top:525px;width:28px;height:16px;background:#f0f0f0;border-top:1px solid #fff;border-left:1px solid #fff;border-right:1px solid #696969;border-bottom:1px solid #696969;box-shadow:inset -1px -1px 0 #a0a0a0"></div>
<svg style="position:absolute;left:825px;top:529px" width="5" height="8"><path d="M4 0.5L0.5 4L4 7.5Z" fill="#5a5a5a"/></svg>
<svg style="position:absolute;left:1153px;top:529px" width="5" height="8"><path d="M0.5 0.5L4 4L0.5 7.5Z" fill="#5a5a5a"/></svg>
<div class="btn" style="left:731px;top:523px;width:36px;height:19px;"><span>Range</span></div>
<div class="edit" style="left:770px;top:522px;width:45px;height:21px;text-align:center;line-height:19px;">95.68</div>
<div class="btn" style="left:206px;top:558px;width:67px;height:19px;"><span>Well Info</span></div>
<div class="btn pr" style="left:279px;top:558px;width:68px;height:19px;"><span>Comments</span></div>
<div class="t " style="left:352px;top:561px;">Summary:</div>
<div class="edit" style="left:407px;top:557px;width:500px;height:21px;text-align:center;line-height:19px;"></div>
<div class="btn" style="left:1099px;top:558px;width:67px;height:19px;"><span>Expand</span></div>
<div style="left:1165px;top:582px;width:1px;height:100px;background:#a0a0a0"></div><div style="left:206px;top:681px;width:960px;height:1px;background:#a0a0a0"></div><div style="left:1166px;top:582px;width:1px;height:101px;background:#fff"></div><div style="left:206px;top:682px;width:961px;height:1px;background:#fff"></div>
<div class="edit" style="left:208px;top:582px;width:955px;height:95px;border-color:#a8a8a8"></div>
<div class="t" style="left:212px;top:582px">&lt;New Experiment&gt;</div>
<div class="t" style="left:210.5px;top:608px">Frequency (Hz),</div>
<div class="t" style="left:355px;top:608px">4000</div>
<div class="t" style="left:210.5px;top:621px">Well,</div>
<div class="t" style="left:288.5px;top:621px">Z (ohms),</div>
<div class="t" style="left:360px;top:621px">R (ohms),</div>
<div class="t" style="left:432.5px;top:621px">C (nF)</div>
<div class="t" style="left:210.5px;top:647px">A01,</div>
<div class="t" style="left:210.5px;top:660px">B01,</div>
<div class="t" style="left:264px;width:60px;text-align:right;top:647px">1478,</div>
<div class="t" style="left:339px;width:60px;text-align:right;top:647px">343,</div>
<div class="t" style="left:403px;width:60px;text-align:right;top:647px">27.7</div>
<div class="t" style="left:264px;width:60px;text-align:right;top:660px">1335,</div>
<div class="t" style="left:339px;width:60px;text-align:right;top:660px">332,</div>
<div class="t" style="left:403px;width:60px;text-align:right;top:660px">30.8</div>
<div style="left:1146px;top:583px;width:16px;height:93px;background:#f0f0f0"></div>
<svg style="position:absolute;left:1150px;top:590px" width="8" height="5"><path d="M0 4.5L4 0.5L8 4.5Z" fill="#4d4d4d"/></svg>
<svg style="position:absolute;left:1150px;top:665px" width="8" height="5"><path d="M0 0.5L4 4.5L8 0.5Z" fill="#4d4d4d"/></svg>
<div style="left:1147px;top:601px;width:14px;height:6px;border:1px solid #9a9a9a;border-radius:2px;background:linear-gradient(#f6f6f6,#d6d6d6)"></div>
<div class="btn" style="left:1190px;top:52px;width:67px;height:19px;"><span>Collect Data</span></div>
<div class="btn pr" style="left:1263px;top:52px;width:67px;height:19px;"><span>Analyze</span></div>
<div class="edit" style="left:1190px;top:76px;width:160px;height:22px;text-align:center;line-height:20px;"></div>
<div class="grp" style="left:1188px;top:109px;width:165px;height:97px;"></div>
<div class="gt" style="left:1198px;top:101px">Time-Series Options</div>
<div class="t " style="left:1198px;top:119px;">Zero Time</div>
<div class="edit" style="left:1261px;top:117px;width:40px;height:20px;text-align:center;line-height:18px;">0</div>
<div class="t " style="left:1309px;top:119px;">hours</div>
<div class="cb" style="left:1197px;top:140px;width:13px;height:13px;"></div>
<div class="t " style="left:1213px;top:139px;">Normalize</div>
<div class="cb" style="left:1197px;top:156px;width:13px;height:13px;"></div>
<div class="t " style="left:1213px;top:155px;">Running Average</div>
<div class="dd" style="left:1300px;top:154px;width:48px;height:21px;background:#f4f4f4;color:#a0a0a0"><span style="position:absolute;left:4.5px;top:0;line-height:19px">5</span><div class="ddb dis" style="height:17px"><svg width="7" height="4" viewBox="0 0 7 4" style="position:absolute;left:4px;top:7px"><path d="M0 0H7L3.5 4Z" fill="#a8a8a8"/></svg></div></div>
<div class="cb" style="left:1197px;top:172px;width:13px;height:13px;"></div>
<div class="t " style="left:1213px;top:171px;">Bin Running Avg.</div>
<div class="cb dis" style="left:1197px;top:188px;width:13px;height:13px;"></div>
<div class="t " style="left:1213px;top:187px;color:#8d8d8d">Standard Deviation</div>
<div class="rd" style="left:1188px;top:213px;width:13px;height:13px;"></div>
<div class="t " style="left:1205px;top:211px;">Analysis</div>
<div class="rd" style="left:1250px;top:213px;width:13px;height:13px;"><div class="rdot"></div></div>
<div class="t " style="left:1266px;top:211px;">Model</div>
<div class="rd dis" style="left:1302px;top:213px;width:13px;height:13px;"></div>
<div class="t " style="left:1320px;top:211px;color:#8d8d8d">TEER</div>
<div class="grp" style="left:1188px;top:238px;width:165px;height:150px;"></div>
<div class="gt" style="left:1198px;top:230px">Freq. Scan Modeling</div>
<div class="btn blue" style="left:1196px;top:249px;width:43px;height:18px;"><span><b style="font-size:12px">Model</b></span></div>
<div class="btn blue" style="left:1244px;top:249px;width:31px;height:18px;"><span>Find</span></div>
<div class="btn blue" style="left:1279px;top:249px;width:31px;height:18px;"><span>Set</span></div>
<div class="btn" style="left:1315px;top:249px;width:31px;height:18px;"><span>Get</span></div>
<div class="cb" style="left:1197px;top:315px;width:13px;height:13px;"></div>
<div class="t " style="left:1213px;top:314px;">Plot Model Fit</div>
<div class="btn" style="left:1275px;top:334px;width:68px;height:18px;"><span>Fit T Range</span></div>
<div class="btn" style="left:1198px;top:358px;width:67px;height:18px;"><span>Clear RbA</span></div>
<div class="btn" style="left:1275px;top:358px;width:68px;height:18px;"><span>Save RbA</span></div>
<div class="grp" style="left:1188px;top:388px;width:165px;height:145px;"></div>
<div class="gt" style="left:1198px;top:380px">Modeling Results</div>
<div class="t " style="left:1199px;top:397px;">Well Results:</div>
<div class="t " style="left:1199px;top:416px;">Time (hrs):</div>
<div class="t " style="left:1305.5px;top:416px;">0.000</div>
<div class="cb" style="left:1199px;top:436px;width:13px;height:13px;"><svg width="9" height="9" viewBox="0 0 9 9" style="position:absolute;left:1px;top:1px"><path d="M1.5 4.5 L3.5 7 L7.5 1" stroke="#2b3f8c" stroke-width="1.8" fill="none"/></svg></div>
<div class="t " style="left:1215px;top:434px;">Rb</div>
<div class="cb" style="left:1199px;top:455px;width:13px;height:13px;"><svg width="9" height="9" viewBox="0 0 9 9" style="position:absolute;left:1px;top:1px"><path d="M1.5 4.5 L3.5 7 L7.5 1" stroke="#2b3f8c" stroke-width="1.8" fill="none"/></svg></div>
<div class="t " style="left:1215px;top:454px;">Alpha</div>
<div class="cb" style="left:1199px;top:475px;width:13px;height:13px;"></div>
<div class="t " style="left:1215px;top:474px;">Cell M. Cap.</div>
<div class="edit" style="left:1294px;top:431px;width:49px;height:21px;text-align:center;line-height:19px;">0.00</div>
<div class="edit" style="left:1294px;top:452px;width:49px;height:20px;text-align:center;line-height:18px;">0.00</div>
<div class="edit" style="left:1294px;top:472px;width:49px;height:21px;text-align:center;line-height:19px;">0.00</div>
<div class="t " style="left:1199px;top:495px;">Drift Correction:</div>
<div class="t " style="left:1304px;top:495px;">0.0 %</div>
<div class="t " style="left:1199px;top:513px;">Model Fit RMSE:</div>
<div class="t " style="left:1305px;top:513px;">0.000</div>
<div class="grp" style="left:1190px;top:541px;width:162px;height:120px;"></div>
<div class="gt" style="left:1200px;top:533px">Display Options</div>
<div class="btn" style="left:1200px;top:550px;width:43px;height:19px;"><span>Export</span></div>
<div class="edit" style="left:1249px;top:547px;width:40px;height:21px;text-align:center;line-height:19px;">800</div>
<div class="t " style="left:1293px;top:553px;">x</div>
<div class="edit" style="left:1303px;top:548px;width:40px;height:20px;text-align:center;line-height:18px;">600</div>
<div class="cb" style="left:1201px;top:579px;width:13px;height:13px;"></div>
<div class="t " style="left:1217px;top:577px;">X:</div>
<div class="cb" style="left:1201px;top:599px;width:13px;height:13px;"></div>
<div class="t " style="left:1217px;top:597px;">Y:</div>
<div class="cb" style="left:1201px;top:619px;width:13px;height:13px;"></div>
<div class="t " style="left:1217px;top:617px;">Z:</div>
<div class="btn" style="left:1200px;top:637px;width:48px;height:18px;"><span>Redraw</span></div>
</body></html>
